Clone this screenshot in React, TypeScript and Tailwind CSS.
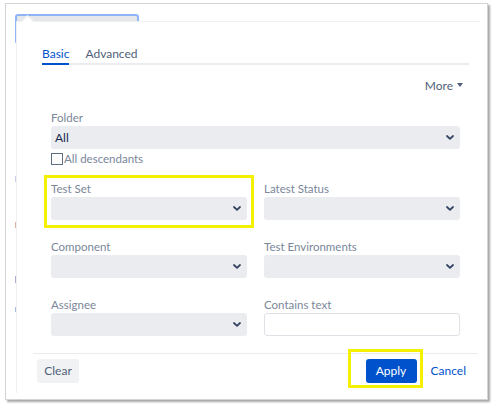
import React from "react";

const font = { fontFamily: "Lato, 'Open Sans', sans-serif" };

function Chevron() {
  return (
    <svg width="8" height="5" viewBox="0 0 8 5" className="shrink-0">
      <polyline
        points="1,1 4,3.8 7,1"
        fill="none"
        stroke="#344563"
        strokeWidth="1.8"
        strokeLinecap="round"
        strokeLinejoin="round"
      />
    </svg>
  );
}

function Select({ value, className = "" }: { value?: string; className?: string }) {
  return (
    <div
      className={`flex h-[23px] items-center justify-between rounded-[3px] bg-[#ebecf0] pl-[4px] pr-[6px] ${className}`}
    >
      <span className="text-[12px] text-[#172b4d]">{value}</span>
      <Chevron />
    </div>
  );
}

function Label({ children }: { children: React.ReactNode }) {
  return <div className="h-[15px] text-[11.5px] leading-[15px] text-[#7a869a]">{children}</div>;
}

function Field({
  label,
  highlight,
  input,
}: {
  label: string;
  highlight?: boolean;
  input?: boolean;
}) {
  return (
    <div className="relative flex flex-col gap-px">
      <Label>{label}</Label>
      {input ? (
        <div className="h-[23px] rounded-[3px] border border-[#dfe1e6] bg-white" />
      ) : (
        <Select />
      )}
      {highlight && (
        <div className="pointer-events-none absolute left-[-7px] right-[-7px] top-[-6px] bottom-[-8px] border-[3px] border-[#f5f000]" />
      )}
    </div>
  );
}

export default function App() {
  return (
    <div className="h-[409px] w-[494px] bg-white" style={font}>
      <div className="ml-[5px] pt-[3px]">
        <div className="relative h-[397px] w-[483px] border border-[#d4d4d4] bg-white shadow-[2px_2px_2px_rgba(0,0,0,0.35)]">
          {/* page behind the popover */}
          <div className="ml-[9px] mt-[10px] h-[30px] w-[124px] rounded-[3px] border-2 border-[#8fb4f5] bg-[#e6e7ea]">
            <div className="ml-[38px] mt-[5px] h-[2px] w-[10px] bg-[#a9acb3]" />
          </div>
          <div className="ml-[9px] mt-[2px] flex w-px flex-col">
            <div className="mt-[130px] h-[6px] w-[2px] bg-[#c9cde6]" />
            <div className="mt-[40px] h-[6px] w-[2px] bg-[#d8b5a8]" />
            <div className="mt-[48px] h-[7px] w-[2px] bg-[#b9a7d4]" />
            <div className="mt-[24px] h-[5px] w-[2px] bg-[#a9bde0]" />
          </div>

          {/* popover */}
          <div className="absolute left-[10px] top-[17px] flex h-[372px] w-[464px] flex-col border-t border-l border-[#eef0f2] bg-white">
            <div className="absolute left-[6px] top-[-5px] h-[9px] w-[9px] rotate-45 border-l border-t border-[#eef0f2] bg-white" />

            <div className="ml-[25px] mr-[11px] mt-[24px] flex gap-[16px] border-b-2 border-[#ebecf0] text-[12px]">
              <div className="-mb-[2px] border-b-2 border-[#0052cc] pb-[1px] leading-[16px] text-[#0052cc]">Basic</div>
              <div className="leading-[16px] text-[#505f79]">Advanced</div>
            </div>

            <div className="mr-[17px] mt-[13px] flex items-center justify-end gap-[4px] text-[12px] leading-[16px] text-[#505f79]">
              <span>More</span>
              <svg width="6" height="4" viewBox="0 0 6 4" className="mb-[3px]">
                <polygon points="0,0 6,0 3,4" fill="#505f79" />
              </svg>
            </div>

            <div className="ml-[34px] mr-[20px] mt-[16px] flex flex-col">
              <Label>Folder</Label>
              <Select value="All" className="mt-px" />
              <div className="mt-[3px] flex items-center gap-[1px]">
                <div className="h-[12px] w-[12px] border border-[#5e6c84] bg-white" />
                <span className="text-[11.5px] leading-[14px] text-[#7a869a]">All descendants</span>
              </div>

              <div className="mt-[15px] grid grid-cols-2 gap-x-[17px] gap-y-[19px]">
                <Field label="Test Set" highlight />
                <Field label="Latest Status" />
                <Field label="Component" />
                <Field label="Test Environments" />
                <Field label="Assignee" />
                <Field label="Contains text" input />
              </div>
            </div>

            <div className="ml-[16px] mr-[2px] mt-[17px] flex items-center justify-between border-t border-[#ebecf0] pb-[5px] pl-[4px] pr-[12px] pt-[5px]">
              <div className="flex h-[24px] w-[42px] items-center justify-center rounded-[3px] bg-[#f1f2f4] text-[12px] text-[#505f79]">
                Clear
              </div>
              <div className="flex items-center gap-[14px]">
                <div className="relative flex h-[24px] w-[51px] items-center justify-center rounded-[3px] bg-[#0052cc] text-[12px] text-white">
                  Apply
                  <div className="pointer-events-none absolute left-[-18px] right-[-6px] top-[-10px] bottom-[-5px] border-[3px] border-[#f5f000]" />
                </div>
                <span className="text-[12px] text-[#0052cc]">Cancel</span>
              </div>
            </div>
          </div>
        </div>
      </div>
    </div>
  );
}
